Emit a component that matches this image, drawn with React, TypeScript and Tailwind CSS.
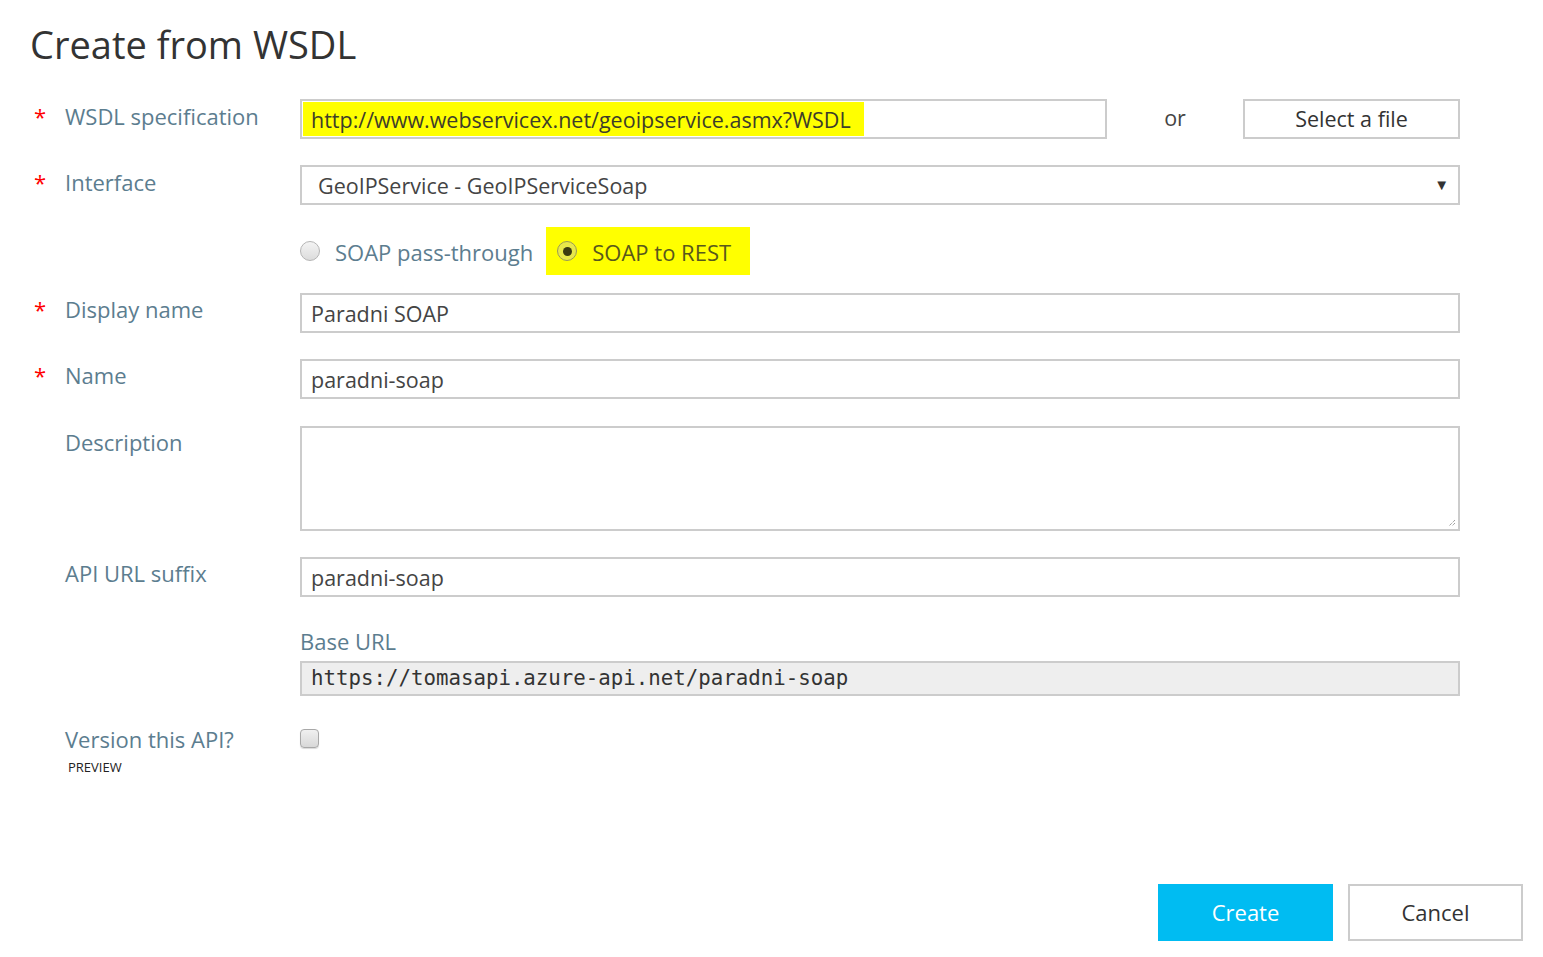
import React from 'react';

const font = { fontFamily: '"Open Sans", "Noto Sans", sans-serif' };

const Label: React.FC<{ text: string; required?: boolean; className?: string }> = ({ text, required, className }) => (
  <div className={`w-[269px] shrink-0 flex ${className ?? ''}`}>
    <span className="w-[34px] pl-[3px] text-[22px] text-[#ff0000] leading-none pt-[3px]">{required ? '*' : ''}</span>
    <span className="text-[22px] text-[#5c7d8f] leading-[28px]">{text}</span>
  </div>
);

const TextBox: React.FC<{ value?: string; className?: string }> = ({ value, className }) => (
  <div className={`h-[40px] border-2 border-[#cccccc] bg-white flex items-center px-[9px] pt-[2px] text-[21.5px] text-[#444444] ${className ?? ''}`}>
    {value}
  </div>
);

export default function App() {
  return (
    <div className="w-[1543px] h-[957px] bg-white relative" style={font}>
      <div className="pl-[31px] pt-[20px] pr-[83px]">
        <h1 className="text-[38px] text-[#333333] leading-[48px] font-normal -ml-[1px]">Create from WSDL</h1>

        {/* WSDL specification */}
        <div className="flex mt-[31px]">
          <Label text="WSDL specification" required className="pt-[3px]" />
          <div className="flex-1 flex items-center">
            <div className="w-[807px] h-[40px] border-2 border-[#cccccc] bg-white p-[1px]">
              <div className="inline-flex items-center h-[34px] bg-[#ffff00] pl-[8px] pr-[13px] pt-[3px] text-[21.5px] text-[#3d3d2a]">
                http://www.webservicex.net/geoipservice.asmx?WSDL
              </div>
            </div>
            <div className="w-[136px] text-center text-[21.5px] text-[#444444] pb-[2px]">or</div>
            <button className="w-[217px] h-[40px] border-2 border-[#cccccc] bg-white text-[21.5px] text-[#333333]">
              Select a file
            </button>
          </div>
        </div>

        {/* Interface */}
        <div className="flex mt-[26px]">
          <Label text="Interface" required className="pt-[3px]" />
          <div className="flex-1 h-[40px] border-2 border-[#cccccc] bg-white flex items-center justify-between pl-[16px] pr-[9px] pt-[2px] text-[21.5px] text-[#444444]">
            <span>GeoIPService - GeoIPServiceSoap</span>
            <span className="text-[15px] text-[#333333] pb-[4px]">▼</span>
          </div>
        </div>

        {/* Radio options */}
        <div className="flex mt-[22px]">
          <div className="w-[269px] shrink-0" />
          <div className="flex items-center h-[48px]">
            <span className="w-[20px] h-[20px] rounded-full border border-[#b5b5b5] bg-gradient-to-b from-[#f4f4f4] to-[#dcdcdc]" />
            <span className="ml-[15px] pt-[2px] text-[22px] text-[#5c7d8f]">SOAP pass-through</span>
            <div className="ml-[13px] h-[48px] w-[204px] bg-[#ffff00] flex items-center pl-[11px]">
              <span className="w-[20px] h-[20px] rounded-full border border-[#9a9a55] bg-[#e8e84a] flex items-center justify-center">
                <span className="w-[9px] h-[9px] rounded-full bg-[#3a3a10]" />
              </span>
              <span className="ml-[15px] pt-[2px] text-[22px] text-[#58581c]">SOAP to REST</span>
            </div>
          </div>
        </div>

        {/* Display name */}
        <div className="flex mt-[18px]">
          <Label text="Display name" required className="pt-[2px]" />
          <TextBox value="Paradni SOAP" className="flex-1" />
        </div>

        {/* Name */}
        <div className="flex mt-[26px]">
          <Label text="Name" required className="pt-[2px]" />
          <TextBox value="paradni-soap" className="flex-1" />
        </div>

        {/* Description */}
        <div className="flex mt-[27px]">
          <Label text="Description" className="pt-[2px]" />
          <div className="flex-1 h-[105px] border-2 border-[#cccccc] bg-white relative">
            <svg className="absolute right-[2px] bottom-[2px]" width="10" height="10" viewBox="0 0 10 10">
              <path d="M9 3 L3 9 M9 6 L6 9" stroke="#777777" strokeWidth="1" strokeDasharray="1 1" />
            </svg>
          </div>
        </div>

        {/* API URL suffix */}
        <div className="flex mt-[26px]">
          <Label text="API URL suffix" className="pt-[2px]" />
          <div className="flex-1">
            <TextBox value="paradni-soap" />
            <div className="mt-[30px] text-[22px] text-[#5c7d8f] leading-[28px]">Base URL</div>
            <div className="mt-[6px] h-[35px] border-2 border-[#cccccc] bg-[#eeeeee] flex items-center px-[9px] text-[20.75px] text-[#333333]" style={{ fontFamily: '"DejaVu Sans Mono", "Liberation Mono", monospace' }}>
              https://tomasapi.azure-api.net/paradni-soap
            </div>
          </div>
        </div>

        {/* Version */}
        <div className="flex mt-[29px]">
          <div className="w-[269px] shrink-0 pl-[34px]">
            <div className="text-[22px] text-[#5c7d8f] leading-[28px]">Version this API?</div>
            <div className="pl-[3px] mt-[5px] text-[13px] text-[#222222] leading-[18px]">PREVIEW</div>
          </div>
          <div className="pt-[4px]">
            <span className="block w-[19px] h-[19px] rounded-[4px] border border-[#a8a8a8] bg-gradient-to-b from-[#f0f0f0] to-[#d8d8d8] shadow-[0_1px_1px_rgba(0,0,0,0.15)]" />
          </div>
        </div>
      </div>

      {/* Footer buttons */}
      <div className="absolute right-[20px] bottom-[16px] flex gap-[15px]">
        <button className="w-[175px] h-[57px] bg-[#00bcf2] text-white text-[22px]">Create</button>
        <button className="w-[175px] h-[57px] border-2 border-[#cccccc] bg-white text-[#333333] text-[22px]">Cancel</button>
      </div>
    </div>
  );
}
